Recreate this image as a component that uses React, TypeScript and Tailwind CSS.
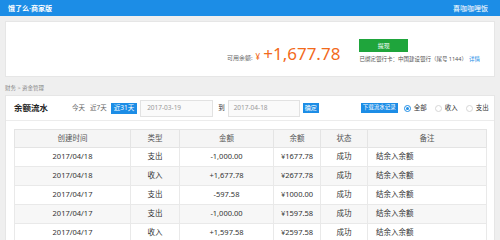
const ROWS = [
  { date: '2017/04/18', type: '支出', amount: '-1,000.00', balance: '¥1677.78' },
  { date: '2017/04/18', type: '收入', amount: '+1,677.78', balance: '¥2677.78' },
  { date: '2017/04/17', type: '支出', amount: '-597.58', balance: '¥1000.00' },
  { date: '2017/04/17', type: '支出', amount: '-1,000.00', balance: '¥1597.58' },
  { date: '2017/04/17', type: '收入', amount: '+1,597.58', balance: '¥2597.58' },
]

const COLS = [
  { label: '创建时间', w: 'w-[116px]' },
  { label: '类型', w: 'w-[49px]' },
  { label: '金额', w: 'w-[94px]' },
  { label: '余额', w: 'w-[47px]' },
  { label: '状态', w: 'w-[47px]' },
  { label: '备注', w: 'w-[119px]' },
]

function Radio({ label, checked }: { label: string; checked?: boolean }) {
  return (
    <label className="flex shrink-0 items-center gap-[3px] whitespace-nowrap text-[6.5px] leading-none text-[#333]">
      <span
        className={
          checked
            ? 'flex size-[7px] items-center justify-center rounded-full border border-[#1c8de6] bg-white'
            : 'size-[7px] rounded-full border border-[#d6d6d6] bg-white'
        }
      >
        {checked && <span className="size-[3px] rounded-full bg-[#1c8de6]" />}
      </span>
      {label}
    </label>
  )
}

export default function App() {
  return (
    <div className="h-[240px] w-[500px] overflow-hidden bg-[#efefef] font-['Noto_Sans','Noto_Sans_CJK_SC',sans-serif]">
      {/* 顶栏 */}
      <div className="flex h-[16px] items-center justify-between bg-[#1c8de6] pl-[8px] pr-[12px] text-[7px] leading-none text-white">
        <span className="font-bold">饿了么·商家版</span>
        <span>喜咖咖哩饭</span>
      </div>

      {/* 余额 */}
      <div className="mx-[5px] mt-[5px] flex h-[56px] items-start border border-[#e6e6e6] bg-white pl-[221px] pt-[17px]">
        <div className="mt-[6px] flex items-baseline text-[#f26a1b]">
          <span className="mr-[3px] text-[6px] text-[#666]">可用余额:</span>
          <span className="mr-[3px] text-[8px]">¥</span>
          <span className="text-[17px] leading-none">+1,677.78</span>
        </div>
        <div className="ml-[19px] flex flex-col">
          <button className="flex h-[13px] w-[49px] items-center justify-center bg-[#1fa53c] text-[6px] leading-none text-white">
            提现
          </button>
          <p className="mt-[5px] whitespace-nowrap text-[5.5px] leading-none text-[#555]">
            已绑定银行卡：中国建设银行（尾号 1144）<span className="ml-[2px] text-[#1c8de6]">详情</span>
          </p>
        </div>
      </div>

      {/* 面包屑 */}
      <div className="h-[18px] pl-[5px] pt-[9px] text-[5.5px] leading-none text-[#888]">财务 &gt; 资金管理</div>

      {/* 流水 */}
      <div className="mx-[5px] border border-[#e6e6e6] bg-white">
        <div className="flex h-[25px] items-center whitespace-nowrap border-b border-[#ececec] pl-[8px] text-[6.5px] leading-none text-[#666] [&>*]:shrink-0">
          <span className="w-[58px] text-[8.5px] font-bold text-[#222]">余额流水</span>
          <span>今天</span>
          <span className="ml-[5px]">近7天</span>
          <span className="ml-[4px] flex h-[11px] items-center bg-[#1c8de6] px-[3px] text-white">近31天</span>
          <div className="ml-[3px] flex h-[17px] w-[73px] items-center border border-[#e2e2e2] bg-[#fafafa] pl-[6px] text-[#999]">
            2017-03-19
          </div>
          <span className="ml-[5px] text-[#333]">到</span>
          <div className="ml-[3px] flex h-[17px] w-[72px] items-center border border-[#e2e2e2] bg-[#fafafa] pl-[5px] text-[#999]">
            2017-04-18
          </div>
          <span className="ml-[3px] flex h-[10px] items-center bg-[#1c8de6] px-[2px] text-[6px] text-white">确定</span>
          <span className="ml-[42px] flex h-[10px] items-center bg-[#1c8de6] px-[2px] text-[5.5px] text-white">下载流水记录</span>
          <div className="ml-[6px] flex items-center gap-[8px]">
            <Radio label="全部" checked />
            <Radio label="收入" />
            <Radio label="支出" />
          </div>
        </div>

        <div className="px-[8px] pt-[8px]">
          <table className="w-[472px] table-fixed border-collapse text-[7.5px] leading-none text-[#333]">
            <thead>
              <tr className="h-[18px] bg-[#f5f5f5] text-[#555]">
                {COLS.map((c) => (
                  <th key={c.label} className={`${c.w} border border-[#e4e4e4] text-center font-normal`}>
                    {c.label}
                  </th>
                ))}
              </tr>
            </thead>
            <tbody>
              {ROWS.map((r, i) => (
                <tr key={i} className={i % 2 ? 'h-[19px] bg-[#f7f7f7]' : 'h-[19px] bg-white'}>
                  <td className="border border-[#e9e9e9] text-center">{r.date}</td>
                  <td className="border border-[#e9e9e9] text-center">{r.type}</td>
                  <td className="border border-[#e9e9e9] text-center">{r.amount}</td>
                  <td className="border border-[#e9e9e9] text-center">{r.balance}</td>
                  <td className="border border-[#e9e9e9] text-center">成功</td>
                  <td className="border border-[#e9e9e9] pl-[8px] text-left">结余入余额</td>
                </tr>
              ))}
            </tbody>
          </table>
        </div>
      </div>
    </div>
  )
}
